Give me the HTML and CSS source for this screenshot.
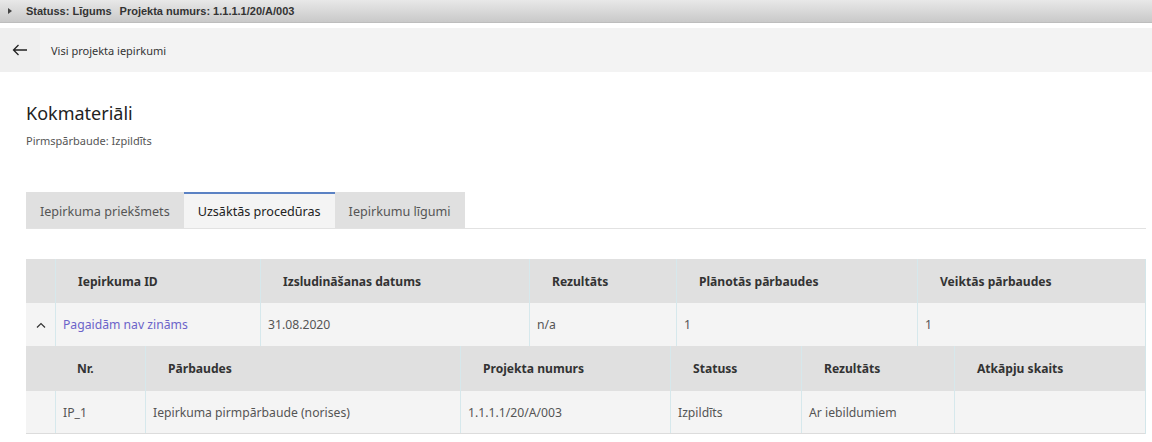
FILE: index.html
```html
<!DOCTYPE html>
<html lang="lv">
<head>
<meta charset="utf-8">
<title>Kokmateriāli</title>
<link rel="stylesheet" href="styles.css">
</head>
<body>
<div class="statusbar">
  <span class="tri"></span>
  <span class="status-text">Statuss: Līgums</span>
  <span class="status-text">Projekta numurs: 1.1.1.1/20/A/003</span>
</div>
<div class="navbar">
  <div class="back">
    <svg width="16" height="12" viewBox="0 0 16 12"><path d="M15 6H1.5M6.5 1L1.5 6l5 5" fill="none" stroke="#222" stroke-width="1.3"/></svg>
  </div>
  <div class="nav-link">Visi projekta iepirkumi</div>
</div>
<main class="content">
  <h1 class="title">Kokmateriāli</h1>
  <div class="subtitle">Pirmspārbaude: Izpildīts</div>
  <div class="tabs">
    <div class="tab">Iepirkuma priekšmets</div>
    <div class="tab active">Uzsāktās procedūras</div>
    <div class="tab">Iepirkumu līgumi</div>
  </div>
  <div class="table">
    <div class="row main head">
      <div class="cell"></div>
      <div class="cell">Iepirkuma ID</div>
      <div class="cell">Izsludināšanas datums</div>
      <div class="cell">Rezultāts</div>
      <div class="cell">Plānotās pārbaudes</div>
      <div class="cell">Veiktās pārbaudes</div>
    </div>
    <div class="row main body">
      <div class="cell chev"><svg width="10" height="6" viewBox="0 0 10 6"><path d="M1 5.5L5 1.5l4 4" fill="none" stroke="#333" stroke-width="1.2"/></svg></div>
      <div class="cell link">Pagaidām nav zināms</div>
      <div class="cell">31.08.2020</div>
      <div class="cell">n/a</div>
      <div class="cell">1</div>
      <div class="cell">1</div>
    </div>
    <div class="row sub head">
      <div class="cell"></div>
      <div class="cell">Nr.</div>
      <div class="cell">Pārbaudes</div>
      <div class="cell">Projekta numurs</div>
      <div class="cell">Statuss</div>
      <div class="cell">Rezultāts</div>
      <div class="cell">Atkāpju skaits</div>
    </div>
    <div class="row sub body last">
      <div class="cell"></div>
      <div class="cell">IP_1</div>
      <div class="cell">Iepirkuma pirmpārbaude (norises)</div>
      <div class="cell">1.1.1.1/20/A/003</div>
      <div class="cell">Izpildīts</div>
      <div class="cell">Ar iebildumiem</div>
      <div class="cell"></div>
    </div>
  </div>
</main>
</body>
</html>
```
FILE: styles.css
```css
* { box-sizing: border-box; }
html, body { margin: 0; padding: 0; background: #fff; }
body { font-family: "Noto Sans", "Open Sans", sans-serif; color: #333; width: 1152px; }

.statusbar {
  height: 23px;
  background: linear-gradient(#e8e8e8, #c9c9c9);
  border-bottom: 1px solid #bdbdbd;
  display: flex;
  align-items: center;
  padding-left: 8px;
  font-family: "Liberation Sans", Arial, sans-serif;
  font-weight: bold;
  font-size: 11px;
  color: #333;
}
.tri {
  width: 0; height: 0;
  border-left: 4px solid #444;
  border-top: 3.5px solid transparent;
  border-bottom: 3.5px solid transparent;
  margin-right: 14px;
}
.status-text { margin-right: 8px; }

.navbar {
  margin-top: 5px;
  height: 44px;
  background: #f3f3f3;
  display: flex;
  align-items: center;
}
.back {
  width: 40px; height: 44px;
  background: #efefef;
  display: flex; align-items: center; justify-content: center;
}
.nav-link { padding-left: 11px; font-size: 11px; color: #333; }

.content { padding: 0 6px 0 26px; }
.title { margin: 29px 0 0; font-weight: 400; font-size: 18px; line-height: 24px; color: #222; }
.subtitle { margin-top: 9px; font-size: 11px; color: #555; line-height: 14px; }

.tabs {
  margin-top: 44px;
  display: flex;
  border-bottom: 1px solid #e2e2e2;
  height: 37px;
}
.tab {
  background: #e0e0e0;
  padding: 0 14px;
  font-size: 12.6px;
  color: #555;
  display: flex; align-items: center;
  height: 36px;
  border-top: 2px solid transparent;
}
.tab.active { background: #f4f4f4; border-top-color: #5b82c4; color: #222; }

.table { margin-top: 30px; width: 1120px; border-right: 1px solid #d3e6ea; }
.row { display: grid; }
.row.main { grid-template-columns: 29px 205px 269px 147px 241px 229px; }
.row.sub { grid-template-columns: 29px 90px 315px 210px 131px 153px 192px; }
.row.head { background: #e0e0e0; height: 44px; }
.row.body { background: #f4f4f4; height: 43px; }
.row.sub.head { height: 45px; }
.row.last { border-bottom: 1px solid #dcdcdc; }
.cell {
  display: flex; align-items: center;
  border-left: 1px solid #d6e8ec;
  white-space: nowrap;
}
.cell:first-child { border-left: none; }
.head .cell { font-size: 12.1px; font-weight: bold; color: #333; padding-left: 22px; }
.body .cell { font-size: 12.2px; color: #555; padding-left: 7px; }
.chev { justify-content: center; padding-left: 0 !important; }
.link { color: #6b63c9 !important; }
.row.sub.head .cell:nth-child(2) { border-left: none; }
```
